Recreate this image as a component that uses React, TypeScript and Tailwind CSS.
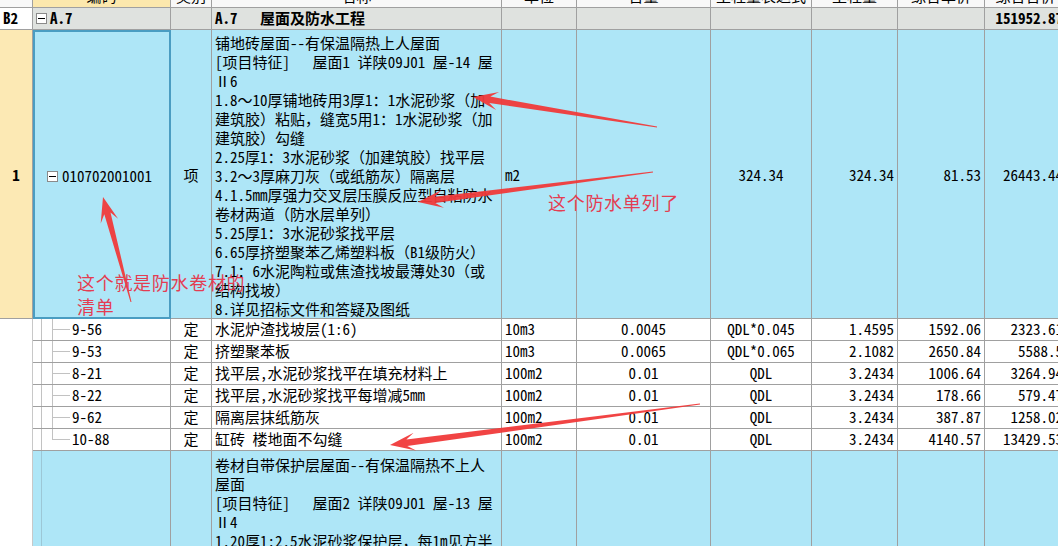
import React from 'react';

const GRID = 'grid grid-cols-[33px_138px_41px_290px_75px_134px_101px_86px_87px_82px]';
const CELL = 'border-r border-b border-[#a0a0a0] overflow-hidden';
const BLUE = 'bg-[#aee6f7]';
const TREE = 'border-[#c2c2c2]';

type SubRow = {
  code: string;
  name: string;
  unit: string;
  content: string;
  expr: string;
  qty: string;
  price: string;
  total: string;
};

const subRows: SubRow[] = [
  { code: '9-56', name: '水泥炉渣找坡层(1:6)', unit: '10m3', content: '0.0045', expr: 'QDL*0.045', qty: '1.4595', price: '1592.06', total: '2323.61' },
  { code: '9-53', name: '挤塑聚苯板', unit: '10m3', content: '0.0065', expr: 'QDL*0.065', qty: '2.1082', price: '2650.84', total: '5588.5' },
  { code: '8-21', name: '找平层,水泥砂浆找平在填充材料上', unit: '100m2', content: '0.01', expr: 'QDL', qty: '3.2434', price: '1006.64', total: '3264.94' },
  { code: '8-22', name: '找平层,水泥砂浆找平每增减5mm', unit: '100m2', content: '0.01', expr: 'QDL', qty: '3.2434', price: '178.66', total: '579.47' },
  { code: '9-62', name: '隔离层抹纸筋灰', unit: '100m2', content: '0.01', expr: 'QDL', qty: '3.2434', price: '387.87', total: '1258.02' },
  { code: '10-88', name: '缸砖 楼地面不勾缝', unit: '100m2', content: '0.01', expr: 'QDL', qty: '3.2434', price: '4140.57', total: '13429.53' },
];

const itemLines = [
  '铺地砖屋面--有保温隔热上人屋面',
  '[项目特征]　 屋面1 详陕09J01 屋-14 屋',
  'Ⅱ6',
  '1.8～10厚铺地砖用3厚1：1水泥砂浆（加',
  '建筑胶）粘贴，缝宽5用1：1水泥砂浆（加',
  '建筑胶）勾缝',
  '2.25厚1：3水泥砂浆（加建筑胶）找平层',
  '3.2～3厚麻刀灰（或纸筋灰）隔离层',
  '4.1.5mm厚强力交叉层压膜反应型自粘防水',
  '卷材两道（防水层单列）',
  '5.25厚1：3水泥砂浆找平层',
  '6.65厚挤塑聚苯乙烯塑料板（B1级防火）',
  '7.1：6水泥陶粒或焦渣找坡最薄处30（或',
  '结构找坡）',
  '8.详见招标文件和答疑及图纸',
];

const nextLines = [
  '卷材自带保护层屋面--有保温隔热不上人',
  '屋面',
  '[项目特征]　 屋面2 详陕09J01 屋-13 屋',
  'Ⅱ4',
  '1.20厚1:2.5水泥砂浆保护层，每1m见方半',
];

const headers = ['', '编码', '类别', '名称', '单位', '含量', '工程量表达式', '工程量', '综合单价', '综合合价'];

// ascii runs get half-width glyphs, full-width punctuation stays full width
const T = ({ s }: { s: string }) => (
  <>
    {s.split(/([\x20-\x7e]+)/).map((seg, i) =>
      /^[\x20-\x7e]+$/.test(seg) ? (
        <span key={i} className="[font-feature-settings:'hwid']">{seg}</span>
      ) : (
        seg
      )
    )}
  </>
);

const ToggleBox = () => (
  <span className="w-[11px] h-[11px] border border-[#8a8a8a] bg-white flex items-center justify-center shrink-0">
    <span className="w-[7px] h-[1px] bg-black" />
  </span>
);

// tapered annotation arrow, tail -> tip
const arrowPoints = (tx: number, ty: number, hx: number, hy: number) => {
  const dx = hx - tx;
  const dy = hy - ty;
  const len = Math.hypot(dx, dy);
  const ux = dx / len;
  const uy = dy / len;
  const nx = -uy;
  const ny = ux;
  const jx = hx - ux * 17;
  const jy = hy - uy * 17;
  const bx = hx - ux * 25;
  const by = hy - uy * 25;
  const pts = [
    [tx + nx * 0.5, ty + ny * 0.5],
    [jx + nx * 3.2, jy + ny * 3.2],
    [bx + nx * 9, by + ny * 9],
    [hx, hy],
    [bx - nx * 9, by - ny * 9],
    [jx - nx * 3.2, jy - ny * 3.2],
    [tx - nx * 0.5, ty - ny * 0.5],
  ];
  return pts.map((p) => `${p[0].toFixed(1)},${p[1].toFixed(1)}`).join(' ');
};

const arrows = [
  [657, 127, 473, 97],
  [653, 172, 418, 202],
  [131, 302, 103, 197],
  [700, 404, 390, 445],
];

export default function App() {
  return (
    <div className="relative w-[1058px] h-[546px] overflow-hidden bg-white text-black text-[15px] font-['Noto_Sans_CJK_SC',sans-serif]">
      {/* header, mostly scrolled out of view */}
      <div className={`${GRID} h-[8px]`}>
        {headers.map((h, i) => (
          <div
            key={i}
            className={`${CELL} h-[8px] flex items-end justify-center ${i === 1 ? 'bg-[#fce8ad]' : 'bg-[#f8f8f8]'}`}
          >
            <span className="leading-[22px] whitespace-nowrap">{h}</span>
          </div>
        ))}
      </div>

      {/* section row */}
      <div className={`${GRID} h-[22px] font-bold`}>
        <div className={`${CELL} bg-white flex items-center pl-[3px]`}><T s="B2" /></div>
        <div className={`${CELL} bg-[#dfe2df] flex items-center gap-[3px] pl-[3px]`}>
          <ToggleBox />
          <span><T s="A.7" /></span>
        </div>
        <div className={`${CELL} bg-[#dfe2df]`} />
        <div className={`${CELL} bg-[#dfe2df] flex items-center pl-[3px] whitespace-pre`}><T s="A.7　 屋面及防水工程" /></div>
        <div className={`${CELL} bg-[#dfe2df]`} />
        <div className={`${CELL} bg-[#dfe2df]`} />
        <div className={`${CELL} bg-[#dfe2df]`} />
        <div className={`${CELL} bg-[#dfe2df]`} />
        <div className={`${CELL} bg-[#dfe2df]`} />
        <div className={`${CELL} bg-[#dfe2df] flex items-center justify-end pr-[3px]`}><T s="151952.87" /></div>
      </div>

      {/* bill item row */}
      <div className={`${GRID} h-[289px]`}>
        <div className={`${CELL} bg-[#fce9b4] flex items-center justify-center font-bold pt-[3px]`}><T s="1" /></div>
        <div className={`border-2 border-[#4a9dc2] ${BLUE} flex items-center gap-[4px] pl-[12px] pt-[3px]`}>
          <ToggleBox />
          <span><T s="010702001001" /></span>
        </div>
        <div className={`${CELL} ${BLUE} flex items-center justify-center pt-[3px]`}>项</div>
        <div className={`${CELL} ${BLUE} pl-[3px] pt-[3px]`}>
          {itemLines.map((l, i) => (
            <div key={i} className="leading-[19px] whitespace-pre"><T s={l} /></div>
          ))}
        </div>
        <div className={`${CELL} ${BLUE} flex items-center pl-[3px] pt-[3px]`}><T s="m2" /></div>
        <div className={`${CELL} ${BLUE}`} />
        <div className={`${CELL} ${BLUE} flex items-center justify-center pt-[3px]`}><T s="324.34" /></div>
        <div className={`${CELL} ${BLUE} flex items-center justify-end pr-[3px] pt-[3px]`}><T s="324.34" /></div>
        <div className={`${CELL} ${BLUE} flex items-center justify-end pr-[3px] pt-[3px]`}><T s="81.53" /></div>
        <div className={`${CELL} ${BLUE} flex items-center justify-end pr-[3px] pt-[3px]`}><T s="26443.44" /></div>
      </div>

      {/* quota rows */}
      {subRows.map((r, i) => {
        const last = i === subRows.length - 1;
        return (
          <div key={r.code} className={`${GRID} h-[22px]`}>
            <div className="border-r border-[#c8c8c8] bg-white" />
            <div className={`${CELL} bg-white flex`}>
              <div className={`w-[9px] border-r ${TREE}`} />
              <div className="w-[10px]" />
              <div className="w-[18px] flex flex-col">
                <div className={`h-1/2 border-l border-b ${TREE}`} />
                <div className={`h-1/2 ${last ? '' : `border-l ${TREE}`}`} />
              </div>
              <span className="self-center pl-[2px] whitespace-nowrap"><T s={r.code} /></span>
            </div>
            <div className={`${CELL} bg-white flex items-center justify-center`}>定</div>
            <div className={`${CELL} bg-white flex items-center pl-[3px] whitespace-pre`}><T s={r.name} /></div>
            <div className={`${CELL} bg-white flex items-center pl-[3px]`}><T s={r.unit} /></div>
            <div className={`${CELL} bg-white flex items-center justify-center`}><T s={r.content} /></div>
            <div className={`${CELL} bg-white flex items-center justify-center`}><T s={r.expr} /></div>
            <div className={`${CELL} bg-white flex items-center justify-end pr-[3px]`}><T s={r.qty} /></div>
            <div className={`${CELL} bg-white flex items-center justify-end pr-[3px]`}><T s={r.price} /></div>
            <div className={`${CELL} bg-white flex items-center justify-end pr-[3px]`}><T s={r.total} /></div>
          </div>
        );
      })}

      {/* next bill item, cut off */}
      <div className={`${GRID} h-[130px]`}>
        <div className="border-r border-[#c8c8c8] bg-white" />
        <div className={`${CELL} ${BLUE} flex`}>
          <div className="w-[9px] border-r border-[#9cc7d6]" />
        </div>
        <div className={`${CELL} ${BLUE}`} />
        <div className={`${CELL} ${BLUE} pl-[3px] pt-[4px]`}>
          {nextLines.map((l, i) => (
            <div key={i} className="leading-[19px] whitespace-pre"><T s={l} /></div>
          ))}
        </div>
        <div className={`${CELL} ${BLUE}`} />
        <div className={`${CELL} ${BLUE}`} />
        <div className={`${CELL} ${BLUE}`} />
        <div className={`${CELL} ${BLUE}`} />
        <div className={`${CELL} ${BLUE}`} />
        <div className={`${CELL} ${BLUE}`} />
      </div>

      {/* red annotations drawn over the sheet */}
      <svg className="absolute inset-0 pointer-events-none" width="1058" height="546" viewBox="0 0 1058 546">
        {arrows.map((a, i) => (
          <polygon key={i} points={arrowPoints(a[0], a[1], a[2], a[3])} fill="#f03a3a" fillOpacity="0.95" />
        ))}
      </svg>
      <div className="absolute left-[77px] top-[270px] text-[18px] leading-[24px] tracking-[0.7px] text-[#e43d52]">
        <div>这个就是防水卷材的</div>
        <div>清单</div>
      </div>
      <div className="absolute left-[548px] top-[190px] text-[18px] leading-[24px] tracking-[0.7px] text-[#e43d52]">
        这个防水单列了
      </div>
    </div>
  );
}
